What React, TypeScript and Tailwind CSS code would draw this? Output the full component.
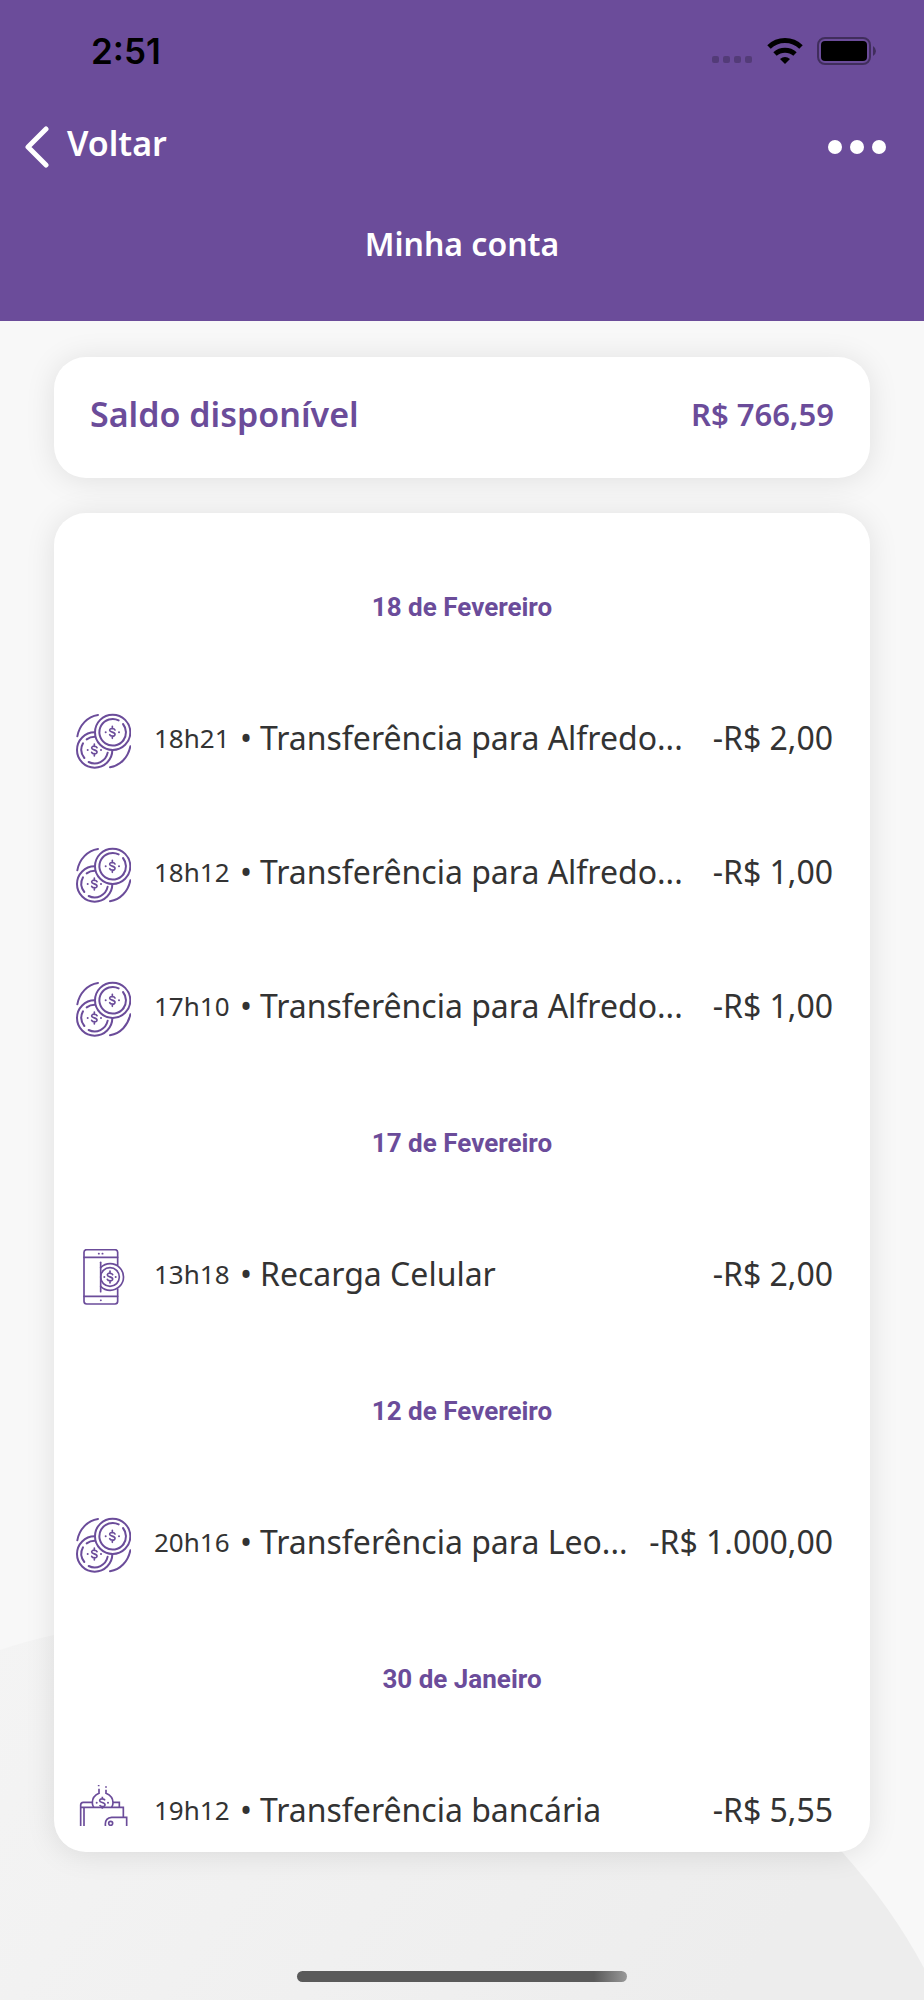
type IconName = "coins" | "phone" | "wallet";

type Entry = {
  id: string;
  icon: IconName;
  time: string;
  title: string;
  amount: string;
};

type Day = {
  label: string;
  entries: Entry[];
};

const days: Day[] = [
  {
    label: "18 de Fevereiro",
    entries: [
      { id: "a1", icon: "coins", time: "18h21", title: "Transferência para Alfredo...", amount: "-R$ 2,00" },
      { id: "a2", icon: "coins", time: "18h12", title: "Transferência para Alfredo...", amount: "-R$ 1,00" },
      { id: "a3", icon: "coins", time: "17h10", title: "Transferência para Alfredo...", amount: "-R$ 1,00" },
    ],
  },
  {
    label: "17 de Fevereiro",
    entries: [{ id: "b1", icon: "phone", time: "13h18", title: "Recarga Celular", amount: "-R$ 2,00" }],
  },
  {
    label: "12 de Fevereiro",
    entries: [{ id: "c1", icon: "coins", time: "20h16", title: "Transferência para Leo...", amount: "-R$ 1.000,00" }],
  },
  {
    label: "30 de Janeiro",
    entries: [{ id: "d1", icon: "wallet", time: "19h12", title: "Transferência bancária", amount: "-R$ 5,55" }],
  },
];

// Dollar mark shared by the three icons, with a dot on each side
function Dollar({ x, y, dots = 20 }: { x: number; y: number; dots?: number }) {
  return (
    <g transform={`translate(${x} ${y})`} strokeWidth="5">
      <path d="M8 -7C6 -12 -8 -14 -8 -6C-8 1 8 -2 8 6C8 14 -6 12 -8 7M0 -18V-11M0 11V18" />
      <circle cx={-dots} cy="0" r="3" fill="currentColor" stroke="none" />
      <circle cx={dots} cy="0" r="3" fill="currentColor" stroke="none" />
    </g>
  );
}

function CoinsIcon() {
  return (
    <svg viewBox="45 39 168 168" className="size-14" fill="none" stroke="currentColor" strokeWidth="6" strokeLinecap="round" aria-hidden="true">
      <path d="M52 109C58 76 82 50 114 45M211 139C204 172 182 196 150 202" />
      <circle cx="104" cy="150" r="53" />
      <path d="M69 130A40 40 0 0 0 73 174M86 186A40 40 0 0 0 143 158" />
      <path d="M80 118A40 40 0 0 1 106 110" />
      <Dollar x={103} y={150} />
      <circle cx="158" cy="97" r="53" fill="white" />
      <path d="M176 61A40 40 0 1 0 190 121" />
      <path d="M189 72A40 40 0 0 1 190 121" />
      <Dollar x={157} y={97} />
    </svg>
  );
}

function PhoneIcon() {
  return (
    <svg viewBox="45 42 168 168" className="size-14" fill="none" stroke="currentColor" strokeWidth="5" strokeLinecap="round" aria-hidden="true">
      <path d="M173 90V52Q173 44 165 44H80Q72 44 72 52V199Q72 207 80 207H165Q173 207 173 199V162" />
      <path d="M72 67H173M72 184H173" />
      <path d="M116 56H117M127 56H128M122 196H123" />
      <path d="M122 82V170" />
      <path d="M122 98A40 40 0 1 1 122 154" />
      <circle cx="150" cy="126" r="28" />
      <Dollar x={150} y={126} dots={17} />
    </svg>
  );
}

function WalletIcon() {
  return (
    <svg viewBox="45 45 168 168" className="size-14" fill="none" stroke="currentColor" strokeWidth="5" aria-hidden="true">
      <path d="M116 45V49M138 49V53M117 56V70C103 76 97 86 97 98Q97 106 101 112M138 59V70C152 76 159 86 159 98Q159 106 155 112" />
      <path d="M97 97H70Q62 97 62 105V205H190V185M62 112H190V142M72 112V205" />
      <path d="M159 97H178V112" />
      <path d="M200 185V142H155Q136 144 136 162Q136 183 155 185Z" />
      <circle cx="152" cy="160" r="6" />
      <Dollar x={127} y={98} dots={17} />
    </svg>
  );
}

const icons = { coins: CoinsIcon, phone: PhoneIcon, wallet: WalletIcon };

function StatusBar() {
  return (
    <div className="flex h-[102px] items-center justify-between pr-[47px] pl-[91px] text-black">
      <span className="font-['Inter'] text-[35px] leading-10 font-semibold">2:51</span>
      <div className="flex items-center gap-[14px]">
        <svg viewBox="0 0 42 26" className="h-[26px] w-[42px]" aria-hidden="true">
          <g fill="black" fillOpacity="0.22">
            <rect x="1" y="18" width="7" height="7" rx="2" />
            <rect x="12" y="18" width="7" height="7" rx="2" />
            <rect x="23" y="18" width="7" height="7" rx="2" />
            <rect x="34" y="18" width="7" height="7" rx="2" />
          </g>
        </svg>
        <svg viewBox="0 0 36 27" className="h-[27px] w-9" fill="none" stroke="black" strokeWidth="5" aria-hidden="true">
          <path d="M2 9A23 23 0 0 1 34 9" />
          <path d="M8 16A15 15 0 0 1 28 16" />
          <path d="M13 21A8 8 0 0 1 23 21L18 26Z" fill="black" stroke="none" />
        </svg>
        <svg viewBox="0 0 60 28" className="h-7 w-[60px]" aria-hidden="true">
          <rect x="1" y="1" width="52" height="26" rx="7" fill="none" stroke="black" strokeOpacity="0.4" strokeWidth="2" />
          <rect x="4" y="4" width="46" height="20" rx="4" fill="black" />
          <path d="M56 9Q59 11 59 14T56 19Z" fill="black" fillOpacity="0.4" />
        </svg>
      </div>
    </div>
  );
}

function EntryRow({ entry }: { entry: Entry }) {
  const Icon = icons[entry.icon];

  return (
    <li className="flex h-[134px] items-center pr-[37px] pl-[21px] whitespace-nowrap text-[#333333]">
      <span className="shrink-0 text-[#6b4c9a]">
        <Icon />
      </span>
      <div className="flex min-w-0 flex-1 items-center pb-[6px] pl-[23px] text-[32px] leading-8">
        <span className="w-[86px] shrink-0 text-[26px]">{entry.time}</span>
        <span className="w-5 shrink-0">•</span>
        <span className="min-w-0 flex-1">{entry.title}</span>
        <span className="shrink-0">{entry.amount}</span>
      </div>
    </li>
  );
}

export default function App() {
  return (
    <div className="relative isolate flex h-screen flex-col overflow-hidden bg-[#f8f8f8] font-['Noto_Sans',sans-serif]">
      <svg viewBox="0 0 924 370" preserveAspectRatio="none" className="absolute bottom-0 left-0 -z-10 h-[370px] w-full" aria-hidden="true">
        <defs>
          <linearGradient id="hill" x1="0" y1="0" x2="1" y2="0.3">
            <stop offset="0" stopColor="#f4f4f4" />
            <stop offset="1" stopColor="#ededed" />
          </linearGradient>
        </defs>
        <path d="M0 20Q26 11 54 5C360 -50 650 10 843 223Q892 278 924 338V370H0Z" fill="url(#hill)" />
      </svg>

      <header className="h-[321px] shrink-0 bg-[#6b4c9a] text-white">
        <StatusBar />
        <nav className="flex h-[90px] items-center justify-between pr-[38px] pl-6">
          <button type="button" className="flex items-center gap-[18px] text-[34px] leading-10 font-semibold">
            <svg viewBox="0 0 25 42" className="h-[42px] w-[25px]" fill="none" stroke="white" strokeWidth="5" strokeLinecap="round" strokeLinejoin="round" aria-hidden="true">
              <path d="M22 3L4 21L22 39" />
            </svg>
            <span className="pb-2">Voltar</span>
          </button>
          <button type="button" aria-label="Mais opções" className="flex gap-2">
            <span className="size-[14px] rounded-full bg-white" />
            <span className="size-[14px] rounded-full bg-white" />
            <span className="size-[14px] rounded-full bg-white" />
          </button>
        </nav>
        <h1 className="pt-8 text-center text-[32px] leading-10 font-semibold">Minha conta</h1>
      </header>

      <main className="flex min-h-0 flex-1 flex-col gap-[35px] px-[54px] pt-9 pb-[119px]">
        <section className="flex h-[121px] shrink-0 items-center justify-between rounded-[32px] bg-white px-9 pb-2 leading-10 font-semibold text-[#6b4c9a] shadow-[0_2px_30px_rgba(0,0,0,0.1)]">
          <h2 className="text-[34px]">Saldo disponível</h2>
          <p className="text-[31px]">R$ 766,59</p>
        </section>

        <section className="flex min-h-0 flex-1 flex-col rounded-[32px] bg-white pt-[27px] pb-[26px] shadow-[0_2px_30px_rgba(0,0,0,0.1)]">
          <div className="min-h-0 flex-1 overflow-hidden">
            {days.map((day) => (
              <section key={day.label}>
                <h3 className="flex h-[134px] items-center justify-center font-['Roboto'] text-[26px] font-bold text-[#6b4c9a]">
                  {day.label}
                </h3>
                <ul>
                  {day.entries.map((entry) => (
                    <EntryRow key={entry.id} entry={entry} />
                  ))}
                </ul>
              </section>
            ))}
          </div>
        </section>
      </main>

      <footer className="flex h-[29px] shrink-0 justify-center">
        <div className="h-[11px] w-[330px] rounded-full bg-linear-to-r from-[#5a5a5a] from-90% to-[#999999]" />
      </footer>
    </div>
  );
}
